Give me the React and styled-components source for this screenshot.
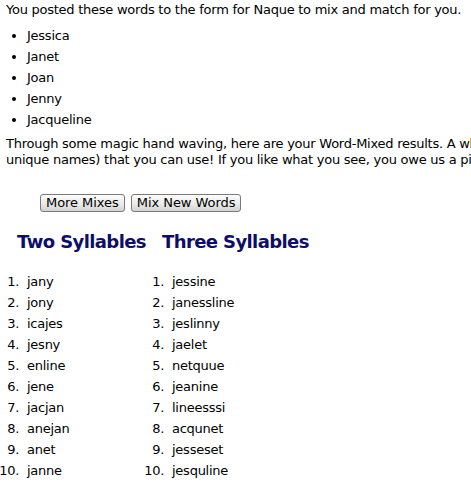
import React from 'react'
import styled, { createGlobalStyle } from 'styled-components'

const GlobalStyle = createGlobalStyle`
  html, body {
    margin: 0;
    padding: 0;
    background: #fff;
    overflow: hidden;
  }
  body {
    font-family: "DejaVu Sans", Verdana, sans-serif;
    font-size: 13px;
    letter-spacing: -0.25px;
    color: #000;
  }
`

const words = ['Jessica', 'Janet', 'Joan', 'Jenny', 'Jacqueline']

const mixes = [
  {
    title: 'Two Syllables',
    names: ['jany', 'jony', 'icajes', 'jesny', 'enline', 'jene', 'jacjan', 'anejan', 'anet', 'janne'],
  },
  {
    title: 'Three Syllables',
    names: ['jessine', 'janessline', 'jeslinny', 'jaelet', 'netquue', 'jeanine', 'lineesssi', 'acqunet', 'jesseset', 'jesquline'],
  },
]

const Page = styled.div`
  padding: 2px 0 0 6px;
`

const Text = styled.p`
  margin: 0;
  line-height: 16px;
  white-space: nowrap;
`

const WordList = styled.ul`
  margin: 7px 0 6px;
  padding-left: 21px;
  li {
    line-height: 21px;
  }
`

const Buttons = styled.form`
  display: flex;
  gap: 6px;
  margin: 26px 0 0;
  padding-left: 34px;
`

const Button = styled.button`
  height: 18px;
  padding: 0 5px;
  font-family: "DejaVu Sans", Verdana, sans-serif;
  font-size: 13px;
  letter-spacing: -0.05px;
  line-height: 16px;
  color: #000;
  background: linear-gradient(#fdfdfd, #e8e8e8 60%, #d2d2d2);
  border: 1px solid #7a7a7a;
  border-radius: 3px;
`

const Results = styled.div`
  display: grid;
  grid-template-columns: 145px 145px;
  margin-top: 19px;
  padding-left: 11px;
`

const Column = styled.div``

const Heading = styled.h2`
  margin: 0;
  font-size: 18px;
  letter-spacing: -0.6px;
  line-height: 22px;
  font-weight: bold;
  color: #0d0d6b;
  white-space: nowrap;
`

const NameList = styled.ol`
  margin: 18px 0 0;
  padding-left: 10px;
  li {
    line-height: 21px;
  }
  li::marker {
    content: counter(list-item) ".\\00a0\\00a0";
  }
`

const App = () => {
  return (
    <Page>
      <GlobalStyle />
      <Text>You posted these words to the form for Naque to mix and match for you.</Text>
      <WordList>
        {words.map((w) => (
          <li key={w}>{w}</li>
        ))}
      </WordList>
      <Text>
        Through some magic hand waving, here are your Word-Mixed results. A whole slew of new words (or
        <br />
        unique names) that you can use! If you like what you see, you owe us a pint.
      </Text>
      <Buttons onSubmit={(e) => e.preventDefault()}>
        <Button type="submit">More Mixes</Button>
        <Button type="button">Mix New Words</Button>
      </Buttons>
      <Results>
        {mixes.map((m) => (
          <Column key={m.title}>
            <Heading>{m.title}</Heading>
            <NameList>
              {m.names.map((n) => (
                <li key={n}>{n}</li>
              ))}
            </NameList>
          </Column>
        ))}
      </Results>
    </Page>
  )
}

export default App
